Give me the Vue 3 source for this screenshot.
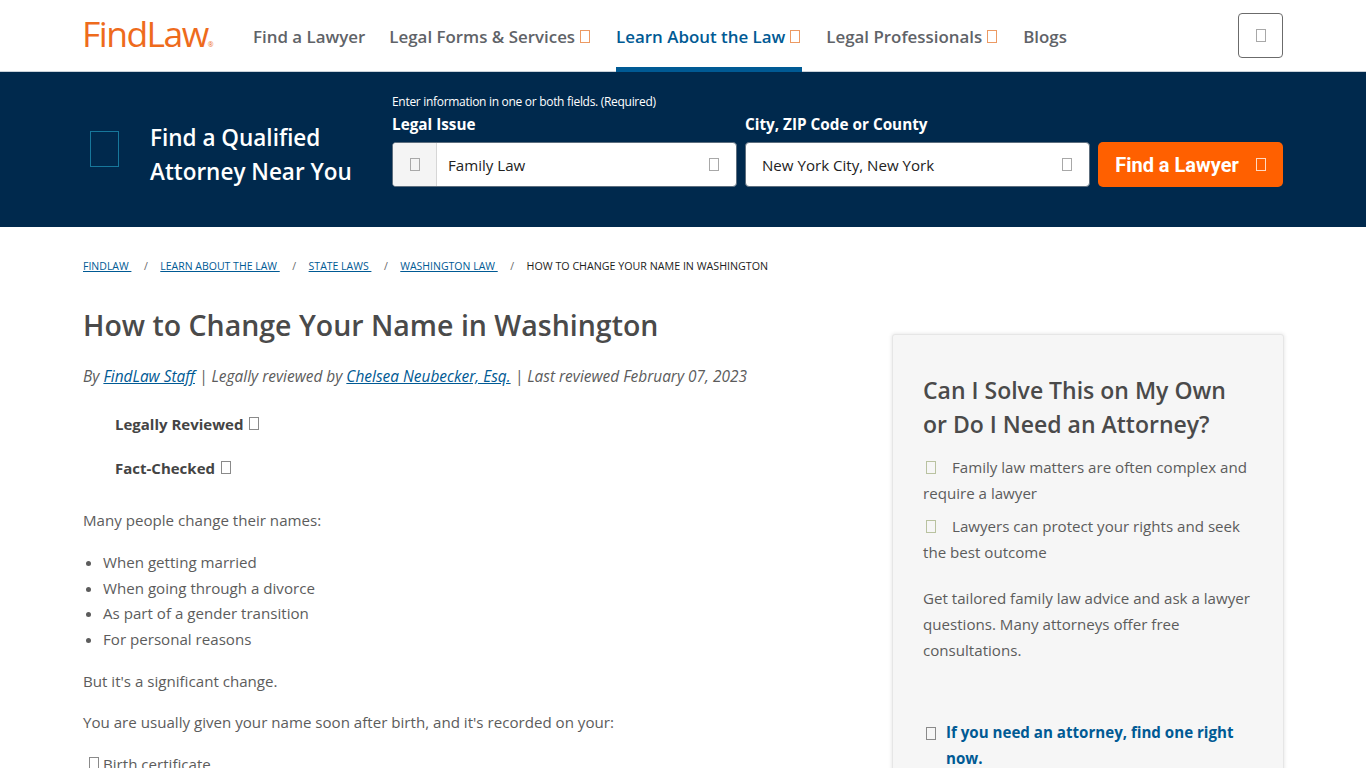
<script setup>
const nav = [
  { label: 'Find a Lawyer' },
  { label: 'Legal Forms & Services', caret: true },
  { label: 'Learn About the Law', caret: true, active: true },
  { label: 'Legal Professionals', caret: true },
  { label: 'Blogs' }
]
const crumbs = ['FINDLAW', 'LEARN ABOUT THE LAW', 'STATE LAWS', 'WASHINGTON LAW']
const bullets = ['When getting married', 'When going through a divorce', 'As part of a gender transition', 'For personal reasons']
</script>

<template>
  <div class="page">
    <header class="topbar">
      <div class="wrap topbar-inner">
        <div class="logo">FindLaw<span class="reg">®</span></div>
        <nav class="nav">
          <a v-for="n in nav" :key="n.label" class="nav-item" :class="{ active: n.active }">
            {{ n.label }}<i v-if="n.caret" class="tofu caret"></i>
          </a>
        </nav>
        <button class="menu-btn"><i class="tofu grey"></i></button>
      </div>
    </header>

    <section class="hero">
      <div class="wrap hero-inner">
        <div class="hero-title">
          <i class="hero-icon"></i>
          <h2>Find a Qualified<br>Attorney Near You</h2>
        </div>
        <form class="hero-form" @submit.prevent>
          <div class="hint">Enter information in one or both fields. (Required)</div>
          <div class="fields">
            <div class="field issue">
              <label>Legal Issue</label>
              <div class="input">
                <span class="addon"><i class="tofu grey"></i></span>
                <span class="value">Family Law</span>
                <i class="tofu grey end"></i>
              </div>
            </div>
            <div class="field city">
              <label>City, ZIP Code or County</label>
              <div class="input">
                <span class="value solo">New York City, New York</span>
                <i class="tofu grey end"></i>
              </div>
            </div>
            <button class="cta">Find a Lawyer<i class="tofu white"></i></button>
          </div>
        </form>
      </div>
    </section>

    <div class="wrap">
      <ol class="crumbs">
        <li v-for="c in crumbs" :key="c"><a>{{ c }}&nbsp;</a><span class="sep">/</span></li>
        <li class="current">HOW TO CHANGE YOUR NAME IN WASHINGTON</li>
      </ol>

      <div class="columns">
        <main class="article">
          <h1>How to Change Your Name in Washington</h1>
          <p class="byline">By <a>FindLaw Staff</a> | Legally reviewed by <a>Chelsea Neubecker, Esq.</a> | Last reviewed February 07, 2023</p>
          <div class="badges">
            <div class="badge">Legally Reviewed <i class="tofu dark"></i></div>
            <div class="badge">Fact-Checked <i class="tofu dark"></i></div>
          </div>
          <p class="intro">Many people change their names:</p>
          <ul>
            <li v-for="b in bullets" :key="b">{{ b }}</li>
          </ul>
          <p>But it's a significant change.</p>
          <p>You are usually given your name soon after birth, and it's recorded on your:</p>
          <p class="doc"><i class="tofu dark"></i>Birth certificate</p>
        </main>

        <aside class="card">
          <h3>Can I Solve This on My Own or Do I Need an Attorney?</h3>
          <p class="check"><i class="tofu green"></i>Family law matters are often complex and require a lawyer</p>
          <p class="check"><i class="tofu green"></i>Lawyers can protect your rights and seek the best outcome</p>
          <p class="advice">Get tailored family law advice and ask a lawyer questions. Many attorneys offer free consultations.</p>
          <div class="find"><i class="tofu dark"></i><a>If you need an attorney, find one right now.</a></div>
        </aside>
      </div>
    </div>
  </div>
</template>

<style>
html, body { margin: 0; height: 768px; overflow: hidden; background: #fff; }
</style>

<style scoped>
.page { font-family: "Open Sans", "Noto Sans", sans-serif; color: #5c5c5c; font-size: 15.12px; line-height: 25.6px; height: 768px; overflow: hidden; }
.wrap { width: 1200px; margin-left: 83px; }
.tofu { display: inline-block; width: 8px; height: 11px; border: 1px solid currentColor; box-sizing: content-box; font-style: normal; }
.tofu.grey { color: #a8a8a8; }
.tofu.dark { color: #8a8a8a; }
.tofu.white { color: #ffd9c2; margin-left: 17px; }
.tofu.green { color: #b9c2a0; }
.tofu.caret { color: #ec9a63; margin: 0 2px 0 5px; }

.topbar { height: 71px; border-bottom: 1px solid #c9d1d9; box-sizing: content-box; background: #fff; }
.topbar-inner { display: flex; align-items: center; height: 71px; }
.logo { width: 170px; font-family: "Open Sans", "Noto Sans", sans-serif; font-size: 35.5px; letter-spacing: -1.55px; color: #ee6b1c; line-height: 71px; height: 71px; position: relative; top: -2px; left: -1px; }
.reg { font-size: 7px; letter-spacing: 0; }
.nav { display: flex; gap: 24px; height: 71px; padding-top: 2px; box-sizing: border-box; }
.nav-item { display: flex; align-items: center; font-size: 16.9px; font-weight: 600; color: #5f6368; height: 69px; box-sizing: border-box; white-space: pre; }
.nav-item.active { color: #005a94; position: relative; }
.nav-item.active::after { content: ""; position: absolute; left: 0; right: 0; bottom: -1px; height: 5px; background: #005a94; }
.menu-btn { margin-left: auto; width: 45px; height: 45px; border: 1px solid #6b6b6b; border-radius: 4px; background: #fff; padding: 0; display: flex; align-items: center; justify-content: center; }

.hero { height: 155px; background: #00294d; color: #fff; }
.hero-inner { display: flex; height: 155px; }
.hero-title { width: 309px; display: flex; align-items: center; }
.hero-icon { display: block; width: 27px; height: 34px; border: 1px solid #17779b; margin: 0 31px 0 7px; flex: none; position: relative; top: -1px; }
.hero-title h2 { margin: 0; font-size: 22.5px; line-height: 34px; font-weight: 600; white-space: nowrap; position: relative; top: 5px; }
.hero-form { display: flex; flex-direction: column; padding-top: 21px; }
.hint { font-size: 12px; line-height: 18px; letter-spacing: -0.3px; }
.fields { display: flex; gap: 8px; align-items: flex-end; margin-top: 1px; }
.field label { display: block; font-size: 15.3px; line-height: 24px; font-weight: 700; margin-bottom: 6px; }
.issue { width: 345px; }
.city { width: 345px; }
.input { display: flex; align-items: center; height: 45px; box-sizing: border-box; background: #fff; border: 1px solid #5d6e7e; border-radius: 4px; color: #222; overflow: hidden; }
.addon { width: 44px; height: 100%; flex: none; background: #f4f4f4; border-right: 1px solid #d6d6d6; display: flex; align-items: center; justify-content: center; box-sizing: border-box; }
.value { padding-left: 11px; font-size: 15.1px; flex: 1; position: relative; top: 1px; }
.value.solo { padding-left: 16px; }
.end { margin-right: 17px; }
.cta { width: 185px; height: 45px; border: 0; border-radius: 5px; background: #ff6000; color: #fff; font-family: Roboto, "Noto Sans", sans-serif; font-size: 20px; font-weight: 700; padding: 0; display: flex; align-items: center; justify-content: center; }

.crumbs { list-style: none; display: flex; margin: 0; padding: 27px 0 0; font-size: 10.5px; line-height: 24px; height: 51px; box-sizing: content-box; color: #1c1c1c; }
.crumbs li { display: flex; white-space: pre; }
.crumbs a { color: #005a94; text-decoration: underline; }
.sep { color: #666; margin: 0 12.5px; }
.current { font-size: 10.7px; }
.columns { display: flex; justify-content: space-between; }
.article { width: 720px; }
.article h1 { margin: 0; font-size: 28.5px; line-height: 40px; font-weight: 600; color: #4a4a4a; }
.article p { margin: 0 0 16px; }
.article .byline { font-style: italic; font-size: 15.45px; padding-top: 19px; margin-bottom: 0; }
.byline a { color: #005a94; text-decoration: underline; }
.badges { padding: 22px 0 0 32px; }
.badge { font-weight: 700; color: #444; height: 44.5px; line-height: 25.6px; font-size: 15px; }
.badge .tofu { margin-left: 2px; }
.article .intro { margin: 7px 0 17px; }
ul { margin: 0 0 16px; padding-left: 20px; }
li::marker { color: #5c5c5c; }
.doc .tofu { margin: 0 4px 0 6px; }
.card { width: 392px; height: 520px; box-sizing: border-box; margin-top: 29px; padding: 38px 30px 0 30px; background: #f6f6f6; border: 1px solid #e6e6e6; border-radius: 3px; box-shadow: 0 0 4px rgba(0,0,0,.12); flex: none; margin-right: -1px; }
.card h3 { margin: 0 0 14px; font-size: 23px; line-height: 34px; font-weight: 600; color: #4a4a4a; }
.card p { margin: 0; }
.card .check { margin-bottom: 8px; }
.check .tofu { margin: 0 16px 0 3px; position: relative; top: 1px; }
.card .advice { margin-top: 21px; }
.find { margin-top: 57px; display: flex; font-weight: 700; }
.find .tofu { flex: none; margin: 7px 10px 0 3px; }
.find a { color: #005a94; }
</style>
